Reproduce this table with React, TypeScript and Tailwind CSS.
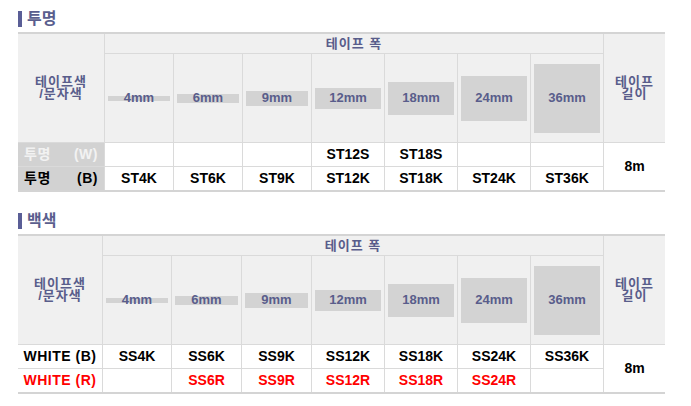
const sizes = [
  { label: "4mm", h: 5 },
  { label: "6mm", h: 9 },
  { label: "9mm", h: 15 },
  { label: "12mm", h: 21 },
  { label: "18mm", h: 33 },
  { label: "24mm", h: 45 },
  { label: "36mm", h: 69 },
];

type Row = { name: string; tag: string; codes: string[]; tone: "light" | "dark" | "black" | "red" };

const SectionTitle = ({ title }: { title: string }) => (
  <div className="flex h-[32px] items-start pt-[10px]">
    <span className="mt-[1px] h-[16px] w-[4px] bg-[#5a5e96]" />
    <span className="ml-[5px] text-[16px] leading-[18px] font-bold text-[#5a5e8e]">{title}</span>
  </div>
);

const TapeTable = ({ cols, rows }: { cols: string; rows: Row[] }) => {
  const head = "bg-[#f0f0f0] text-[#595d8b] font-bold";
  return (
    <div
      className={`grid w-[647px] gap-px border-y-2 border-[#d4d4d4] bg-[#dadada] ${cols} grid-rows-[19px_88px_23px_23px]`}
    >
      <div className={`${head} row-span-2 flex items-center justify-center text-center text-[13px] leading-[12px] tracking-[1px]`}>
        <p>
          테이프색
          <br />
          /문자색
        </p>
      </div>
      <div className={`${head} col-span-7 flex items-center justify-center text-[13px] tracking-[1px]`}>
        테이프 폭
      </div>
      <div className={`${head} row-span-2 flex items-center justify-center text-center text-[13px] leading-[12px] tracking-[1px]`}>
        <p>
          테이프
          <br />
          길이
        </p>
      </div>
      {sizes.map((s) => (
        <div key={s.label} className={`${head} flex items-center px-[3px]`}>
          <div
            className="flex w-full items-center justify-center bg-[#d3d3d3] text-[13px] leading-[14px]"
            style={{ height: s.h }}
          >
            {s.label}
          </div>
        </div>
      ))}
      {rows.map((r, i) => {
        const color = r.tone === "red" ? "text-[#ff0000]" : "text-black";
        const first =
          r.tone === "light"
            ? "bg-[#d2d2d2] text-[#f2f2f2] justify-between px-[6px]"
            : r.tone === "dark"
              ? "bg-[#d2d2d2] text-black justify-between px-[6px]"
              : `bg-white ${color} justify-center`;
        return (
          <div key={r.name + r.tag} className="contents">
            <div className={`flex items-center text-[14px] font-bold tracking-[0.5px] ${first}`}>
              {r.tag ? (
                <>
                  <span>{r.name}</span>
                  <span>{r.tag}</span>
                </>
              ) : (
                <span>{r.name}</span>
              )}
            </div>
            {r.codes.map((c, j) => (
              <div key={j} className={`flex items-center justify-center bg-white text-[14px] font-bold ${color}`}>
                {c}
              </div>
            ))}
            {i === 0 && (
              <div className="row-span-2 flex items-center justify-center bg-white text-[14px] font-bold text-black">
                8m
              </div>
            )}
          </div>
        );
      })}
    </div>
  );
};

const clearRows: Row[] = [
  { name: "투명", tag: "(W)", codes: ["", "", "", "ST12S", "ST18S", "", ""], tone: "light" },
  { name: "투명", tag: "(B)", codes: ["ST4K", "ST6K", "ST9K", "ST12K", "ST18K", "ST24K", "ST36K"], tone: "dark" },
];

const whiteRows: Row[] = [
  { name: "WHITE (B)", tag: "", codes: ["SS4K", "SS6K", "SS9K", "SS12K", "SS18K", "SS24K", "SS36K"], tone: "black" },
  { name: "WHITE (R)", tag: "", codes: ["", "SS6R", "SS9R", "SS12R", "SS18R", "SS24R", ""], tone: "red" },
];

export default function App() {
  return (
    <div className="min-h-[406px] w-[691px] bg-white pl-[18px] font-['Liberation_Sans','Noto_Sans_CJK_KR',sans-serif]">
      <SectionTitle title="투명" />
      <TapeTable cols="grid-cols-[86px_68px_68px_68px_72px_72px_72px_72px_61px]" rows={clearRows} />
      <div className="mt-[10px]">
        <SectionTitle title="백색" />
      </div>
      <TapeTable cols="grid-cols-[84px_68px_69px_69px_72px_72px_72px_72px_61px]" rows={whiteRows} />
    </div>
  );
}
